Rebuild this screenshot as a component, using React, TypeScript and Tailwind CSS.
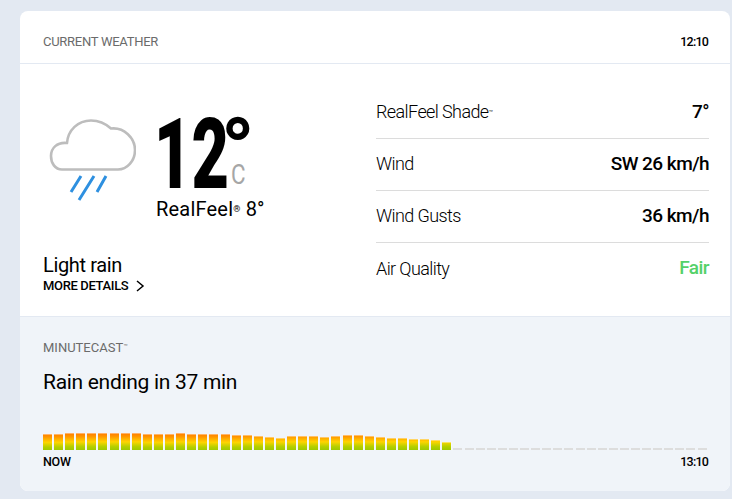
const RAIN_BARS = [
  16.5, 16.5, 17, 17, 17, 17, 17, 17, 17, 16.5, 16.5, 16.5, 17, 16.5, 16.5, 16.5, 16.5, 15.5, 15, 14, 13, 12, 14, 14, 14,
  13, 14, 15, 15, 14, 13, 12, 12, 11, 11, 10, 8,
]
const EMPTY_BARS = Array.from({ length: 23 })

const DETAILS = [
  { label: 'RealFeel Shade', tm: true, value: '7°', color: 'text-black' },
  { label: 'Wind', value: 'SW 26 km/h', color: 'text-black' },
  { label: 'Wind Gusts', value: '36 km/h', color: 'text-black' },
  { label: 'Air Quality', value: 'Fair', color: 'text-[#54d169]' },
]

function RainIcon() {
  return (
    <svg width="88" height="85" viewBox="0 0 88 85" fill="none" className="mt-[8px] ml-[5px] shrink-0">
      <path
        d="M14 51.5C7 51.5 3 45 3 38C3 30 9 24 19 25C20 12 30 2.5 43 2.5C52 2.5 58 6 63 10.5C76 9 87 20 87 32C87 43 79 51.5 70 51.5Z"
        stroke="#bdbdbd"
        strokeWidth="2.6"
        strokeLinejoin="round"
      />
      <path d="M33 58L23 74M46 58L31 82M58 58L49 74" stroke="#2e90e0" strokeWidth="3" />
    </svg>
  )
}

export default function App() {
  return (
    <div className="h-[499px] w-[732px] overflow-hidden bg-[#e3e9f2] pt-[11px] pl-[20px] pr-[2px] font-['Roboto',sans-serif]">
      <div className="h-[480px] overflow-hidden rounded-lg bg-white">
        {/* Header */}
        <div className="flex h-[53px] items-center justify-between border-b border-[#e3e9f2] pt-[10px] pl-[23px] pr-[22px]">
          <span className="text-[13px] tracking-[-0.27px] text-[#6b6b6b]">CURRENT WEATHER</span>
          <span className="text-[12.5px] font-medium tracking-[-0.8px] text-black">12:10</span>
        </div>

        {/* Conditions */}
        <div className="flex h-[252px]">
          <div className="flex w-[356px] flex-col pl-[23px]">
            <div className="flex h-[160px] items-start pt-[46px]">
              <RainIcon />
              <div className="ml-[20px]">
                <div className="flex h-[86px] items-start">
                  {/* DIN digits are much narrower than Roboto's */}
                  <span className="ml-[-2px] inline-block w-[67px] origin-left scale-x-[0.66] text-[98px] leading-[90px] font-black text-black">
                    12
                  </span>
                  <div className="flex w-[26px] flex-col">
                    <span className="mt-[-6px] h-[56px] text-[85px] leading-[90px] font-black text-black">°</span>
                    <span className="ml-[10px] inline-block origin-left scale-x-[0.8] text-[28px] leading-[30px] text-[#a6a6a6]">
                      C
                    </span>
                  </div>
                </div>
                <div className="mt-[1px] text-[20px] leading-[24px] tracking-[0.2px] whitespace-nowrap text-black">
                  RealFeel<sup className="text-[9px]">®</sup> 8°
                </div>
              </div>
            </div>
            <div className="mt-[29px] text-[20px] leading-[24px] tracking-[-0.35px] text-black">Light rain</div>
            <div className="mt-[1px] flex items-center text-[13px] leading-[16px] font-medium tracking-[-0.35px] text-black">
              MORE DETAILS
              <svg width="10" height="12" viewBox="0 0 10 12" fill="none" className="ml-[7px]">
                <path d="M2 1L8 6L2 11" stroke="#000" strokeWidth="1.5" />
              </svg>
            </div>
          </div>
          <div className="flex-1 pt-[23px] pr-[21px]">
            {DETAILS.map((d, i) => (
              <div
                key={d.label}
                className={`flex h-[52px] items-center justify-between ${i < DETAILS.length - 1 ? 'border-b border-[#dcdcdc]' : ''}`}
              >
                <span className="pb-[2px] text-[18px] font-light tracking-[-0.6px] text-black">
                  {d.label}
                  {d.tm && <sup className="text-[7px]">™</sup>}
                </span>
                <span className={`pb-[1px] text-[19px] font-medium tracking-[-0.55px] ${d.color}`}>{d.value}</span>
              </div>
            ))}
          </div>
        </div>

        {/* MinuteCast */}
        <div className="h-[175px] border-t border-[#e3e9f2] bg-[#f0f4f9] pt-[24px] pl-[23px] pr-[22px]">
          <div className="text-[13px] leading-[14px] text-[#6b6b6b]">
            MINUTECAST<sup className="text-[7px]">™</sup>
          </div>
          <div className="mt-[13px] text-[21px] leading-[28px] tracking-[-0.3px] text-black">Rain ending in 37 min</div>
          <div className="mt-[36px] flex h-[18px] items-end justify-between">
            {RAIN_BARS.map((h, i) => (
              <div
                key={i}
                className="w-[10px] shrink-0 border-t border-r border-white/40 bg-[linear-gradient(to_top,#9fc900_0%,#b5cf00_20%,#ffd400_48%,#ff9600_80%,#ff7a00_100%)] bg-[length:100%_17px] bg-bottom bg-no-repeat"
                style={{ height: h }}
              />
            ))}
            {EMPTY_BARS.map((_, i) => (
              <div key={i} className="h-[2px] w-[10px] shrink-0 border-r border-[#f0f4f9] bg-[#dddddd]" />
            ))}
          </div>
          <div className="mt-[4px] flex justify-between text-[12.5px] leading-[16px] font-medium tracking-[-0.3px] text-black">
            <span>NOW</span>
            <span className="tracking-[-0.8px]">13:10</span>
          </div>
        </div>
      </div>
    </div>
  )
}
